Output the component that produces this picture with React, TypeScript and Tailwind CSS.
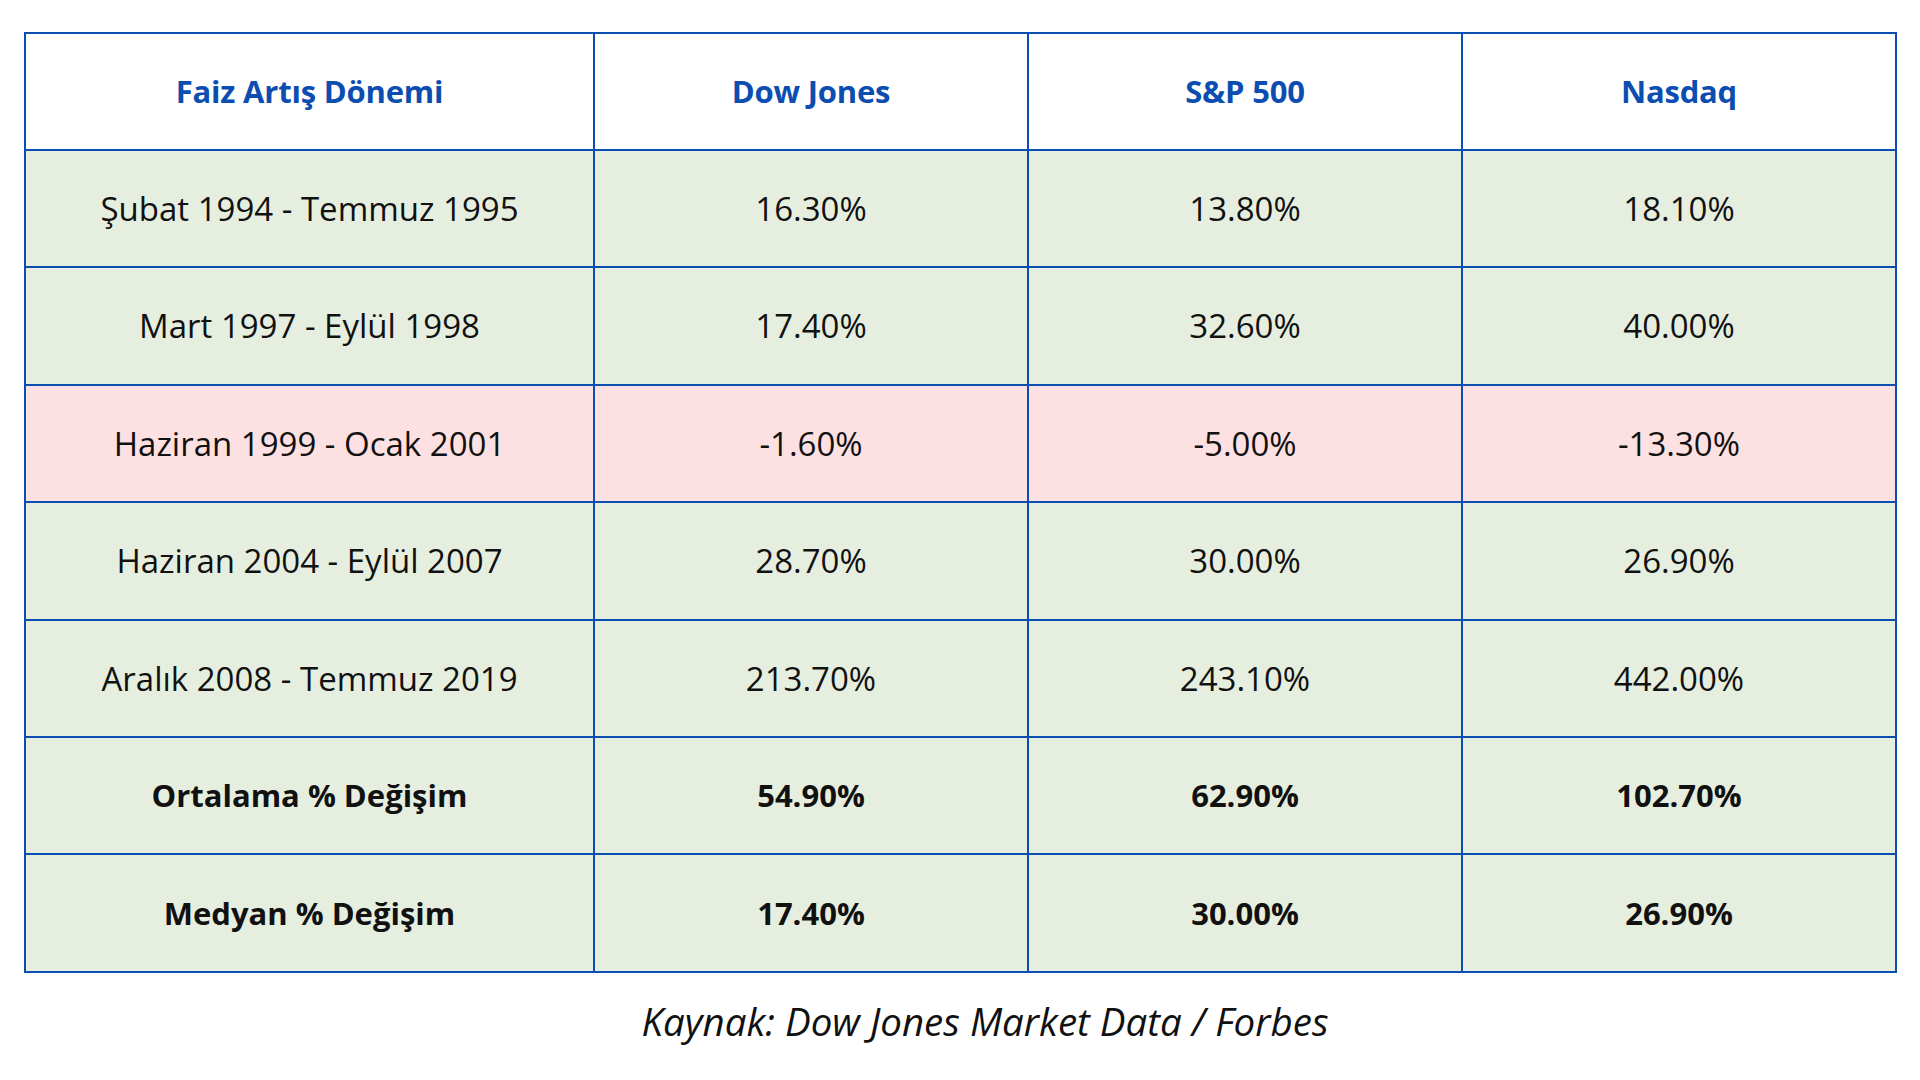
import React from "react";

const rows: { label: string; vals: string[]; pink?: boolean; bold?: boolean }[] = [
  { label: "Şubat 1994 - Temmuz 1995", vals: ["16.30%", "13.80%", "18.10%"] },
  { label: "Mart 1997 - Eylül 1998", vals: ["17.40%", "32.60%", "40.00%"] },
  { label: "Haziran 1999 - Ocak 2001", vals: ["-1.60%", "-5.00%", "-13.30%"], pink: true },
  { label: "Haziran 2004 - Eylül 2007", vals: ["28.70%", "30.00%", "26.90%"] },
  { label: "Aralık 2008 - Temmuz 2019", vals: ["213.70%", "243.10%", "442.00%"] },
  { label: "Ortalama % Değişim", vals: ["54.90%", "62.90%", "102.70%"], bold: true },
  { label: "Medyan % Değişim", vals: ["17.40%", "30.00%", "26.90%"], bold: true },
];

export default function App() {
  return (
    <div
      className="w-[1920px] h-[1080px] bg-white flex flex-col items-start pl-[24px] pt-[32px]"
      style={{ fontFamily: '"Open Sans", "Noto Sans", sans-serif' }}
    >
      <table className="border-collapse border-2 border-[#0b4db0] table-fixed w-[1871px]">
        <colgroup>
          <col className="w-[569px]" />
          <col className="w-[434px]" />
          <col className="w-[434px]" />
          <col className="w-[434px]" />
        </colgroup>
        <thead>
          <tr className="h-[117px] bg-white">
            {["Faiz Artış Dönemi", "Dow Jones", "S&P 500", "Nasdaq"].map((h) => (
              <th
                key={h}
                className="border-2 border-[#0b4db0] text-center align-middle text-[31px] font-bold text-[#0b4db0] tracking-[-0.2px]"
              >
                {h}
              </th>
            ))}
          </tr>
        </thead>
        <tbody>
          {rows.map((r) => (
            <tr
              key={r.label}
              className={`h-[117.4px] ${r.pink ? "bg-[#fde0e1]" : "bg-[#e6efdf]"}`}
            >
              {[r.label, ...r.vals].map((v, i) => (
                <td
                  key={i}
                  className={`border-2 border-[#0b4db0] text-center align-middle text-[#111111] ${
                    r.bold ? "font-bold text-[31px]" : "font-normal text-[33px]"
                  }`}
                >
                  {v}
                </td>
              ))}
            </tr>
          ))}
        </tbody>
      </table>
      <div className="w-[1920px] -ml-[24px] flex justify-center pl-[50px] mt-[20px]">
        <span className="italic text-[38.5px] text-[#111111]">
          Kaynak: Dow Jones Market Data / Forbes
        </span>
      </div>
    </div>
  );
}
